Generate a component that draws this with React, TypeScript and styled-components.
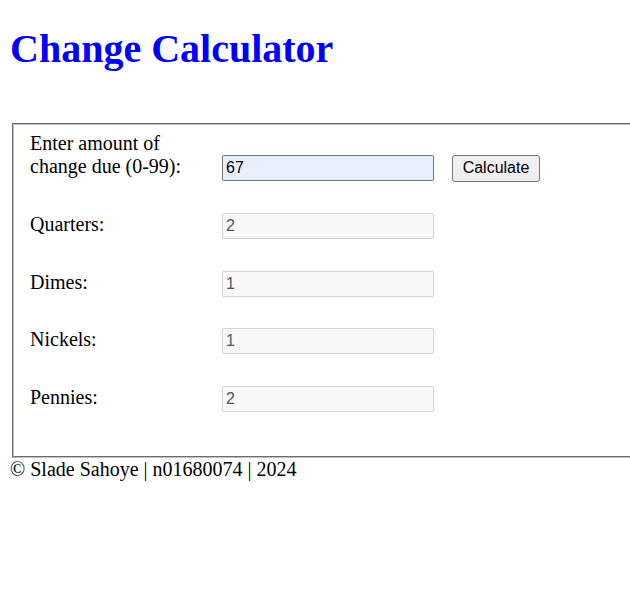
import React from "react";
import styled, { createGlobalStyle } from "styled-components";

const Global = createGlobalStyle`
  html, body {
    margin: 0;
    padding: 0;
    overflow: hidden;
    background: #ffffff;
  }
  body {
    font-family: "Liberation Serif", "Times New Roman", serif;
    font-size: 20px;
    color: #000000;
  }
`;

const Page = styled.div`
  padding: 0 10px;
`;

const Title = styled.h1`
  margin: 26px 0 0;
  font-family: "Liberation Serif", "Times New Roman", serif;
  font-size: 40px;
  line-height: 46px;
  font-weight: bold;
  color: #0000ff;
`;

const Panel = styled.form`
  margin: 51px 0 0 2px;
  width: 640px;
  box-sizing: border-box;
  border: 2px groove #c0c0c0;
  padding: 7px 16px 44px;
  display: flex;
  flex-direction: column;
  gap: 31.5px;
`;

const Row = styled.div`
  display: flex;
  align-items: last baseline;
`;

const Label = styled.label`
  width: 192px;
  flex: none;
  line-height: 23px;
`;

const Field = styled.input<{ $editable?: boolean }>`
  box-sizing: border-box;
  width: 212px;
  height: 26px;
  margin: 0;
  padding: 0 3px;
  font-family: "Liberation Sans", Arial, sans-serif;
  font-size: 16px;
  border-radius: 2px;
  outline: none;
  border: 1px solid ${(p) => (p.$editable ? "#767676" : "#d4d4d4")};
  background: ${(p) => (p.$editable ? "#e8f0fe" : "#f8f8f8")};
  color: ${(p) => (p.$editable ? "#000000" : "#545454")};
`;

const Button = styled.button`
  box-sizing: border-box;
  margin-left: 18px;
  width: 88px;
  height: 27px;
  padding: 0 6px;
  font-family: "Liberation Sans", Arial, sans-serif;
  font-size: 16px;
  color: #000000;
  background: #efefef;
  border: 1px solid #767676;
  border-radius: 3px;
`;

const Footer = styled.footer`
  line-height: 23px;
`;

const coins = [
  { label: "Quarters:", value: "2" },
  { label: "Dimes:", value: "1" },
  { label: "Nickels:", value: "1" },
  { label: "Pennies:", value: "2" },
];

export default function App() {
  return (
    <>
      <Global />
      <Page>
        <Title>Change Calculator</Title>
        <Panel onSubmit={(e) => e.preventDefault()}>
          <Row>
            <Label htmlFor="amount">
              Enter amount of
              <br />
              change due (0-99):
            </Label>
            <Field id="amount" $editable defaultValue="67" />
            <Button type="button">Calculate</Button>
          </Row>
          {coins.map((c) => (
            <Row key={c.label}>
              <Label>{c.label}</Label>
              <Field readOnly value={c.value} />
            </Row>
          ))}
        </Panel>
        <Footer>© Slade Sahoye | n01680074 | 2024</Footer>
      </Page>
    </>
  );
}
